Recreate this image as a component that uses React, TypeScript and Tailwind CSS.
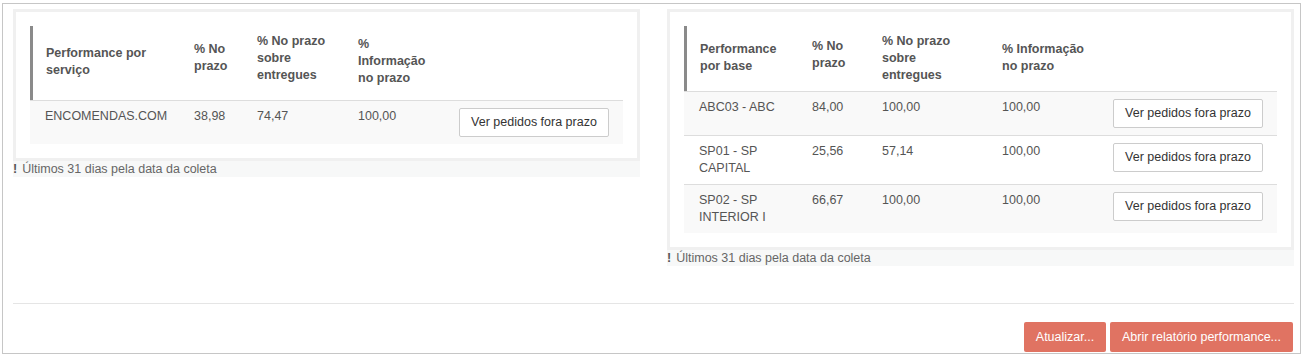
import React from 'react';

type Head = { lines: string[]; pad: string };
type Row = { name: string[]; vals: string[] };

const leftHeads: Head[] = [
  { lines: ['Performance por', 'serviço'], pad: 'pt-[19px]' },
  { lines: ['% No', 'prazo'], pad: 'pt-[15px]' },
  { lines: ['% No prazo', 'sobre', 'entregues'], pad: 'pt-[7px]' },
  { lines: ['%', 'Informação', 'no prazo'], pad: 'pt-[10px]' },
];

const rightHeads: Head[] = [
  { lines: ['Performance', 'por base'], pad: 'pt-[15px]' },
  { lines: ['% No', 'prazo'], pad: 'pt-[12px]' },
  { lines: ['% No prazo', 'sobre', 'entregues'], pad: 'pt-[7px]' },
  { lines: ['% Informação', 'no prazo'], pad: 'pt-[15px]' },
];

const leftRows: Row[] = [{ name: ['ENCOMENDAS.COM'], vals: ['38,98', '74,47', '100,00'] }];

const rightRows: Row[] = [
  { name: ['ABC03 - ABC'], vals: ['84,00', '100,00', '100,00'] },
  { name: ['SP01 - SP', 'CAPITAL'], vals: ['25,56', '57,14', '100,00'] },
  { name: ['SP02 - SP', 'INTERIOR I'], vals: ['66,67', '100,00', '100,00'] },
];

const Lines = ({ lines }: { lines: string[] }) => (
  <>
    {lines.map((l, i) => (
      <div key={i} className="whitespace-nowrap">
        {l}
      </div>
    ))}
  </>
);

const PerfTable = ({
  grid,
  headH,
  heads,
  rows,
}: {
  grid: string;
  headH: string;
  heads: Head[];
  rows: Row[];
}) => (
  <div>
    <div className={`grid ${grid} ${headH} border-b border-[#dddddd] font-bold text-[#555]`}>
      {heads.map((h, i) => (
        <div
          key={i}
          className={`${h.pad} pl-[13px] ${i === 0 ? 'border-l-[3px] border-[#8a8a8a]' : ''}`}
        >
          <Lines lines={h.lines} />
        </div>
      ))}
      <div />
    </div>
    {rows.map((r, i) => (
      <div
        key={i}
        className={`grid ${grid} items-start ${i % 2 === 0 ? 'bg-[#f9f9f9]' : 'bg-white'} ${
          i > 0 ? 'border-t border-[#dddddd]' : ''
        } text-[#555]`}
      >
        <div className="py-[7px] pl-[15px]">
          <Lines lines={r.name} />
        </div>
        {r.vals.map((v, j) => (
          <div key={j} className="py-[7px] pl-[13px]">
            {v}
          </div>
        ))}
        <div className="py-[7px] pl-[13px]">
          <button className="h-[29px] w-[150px] rounded-[2px] border border-[#cccccc] bg-white text-[#333]">
            Ver pedidos fora prazo
          </button>
        </div>
      </div>
    ))}
  </div>
);

const Footnote = () => (
  <div className="flex h-[16px] items-center bg-[#f7f8f8] leading-[16px] text-[#666]">
    <span className="mr-[5px] font-bold text-[#555]">!</span>
    Últimos 31 dias pela data da coleta
  </div>
);

export default function App() {
  return (
    <div className="min-h-screen bg-white pt-[3px] pl-[2px] font-['Liberation_Sans',Arial,sans-serif] text-[12.5px] leading-[17px]">
      <div className="flex h-[351px] w-[1299px] flex-col border border-[#c6c6c6] pt-[5px] pl-[10px] pr-[6px]">
        <div className="flex items-start gap-[27px]">
          <div className="w-[627px]">
            <div className="border-[3px] border-[#f0f0f0] bg-white p-[14px]">
              <PerfTable
                grid="grid-cols-[151px_63px_101px_101px_177px]"
                headH="h-[75px]"
                heads={leftHeads}
                rows={leftRows}
              />
            </div>
            <Footnote />
          </div>
          <div className="w-[627px]">
            <div className="border-[3px] border-[#f0f0f0] bg-white p-[14px]">
              <PerfTable
                grid="grid-cols-[115px_70px_120px_111px_176px]"
                headH="h-[66px]"
                heads={rightHeads}
                rows={rightRows}
              />
            </div>
            <Footnote />
          </div>
        </div>
        <div className="mt-auto border-t border-[#e5e5e5]" />
        <div className="mr-[1px] flex justify-end gap-[4px] pt-[18px] pb-[1px]">
          <button className="h-[30px] w-[82px] rounded-[2px] bg-[#e07362] text-white">Atualizar...</button>
          <button className="h-[30px] w-[183px] rounded-[2px] bg-[#e07362] text-white">
            Abrir relatório performance...
          </button>
        </div>
      </div>
    </div>
  );
}
